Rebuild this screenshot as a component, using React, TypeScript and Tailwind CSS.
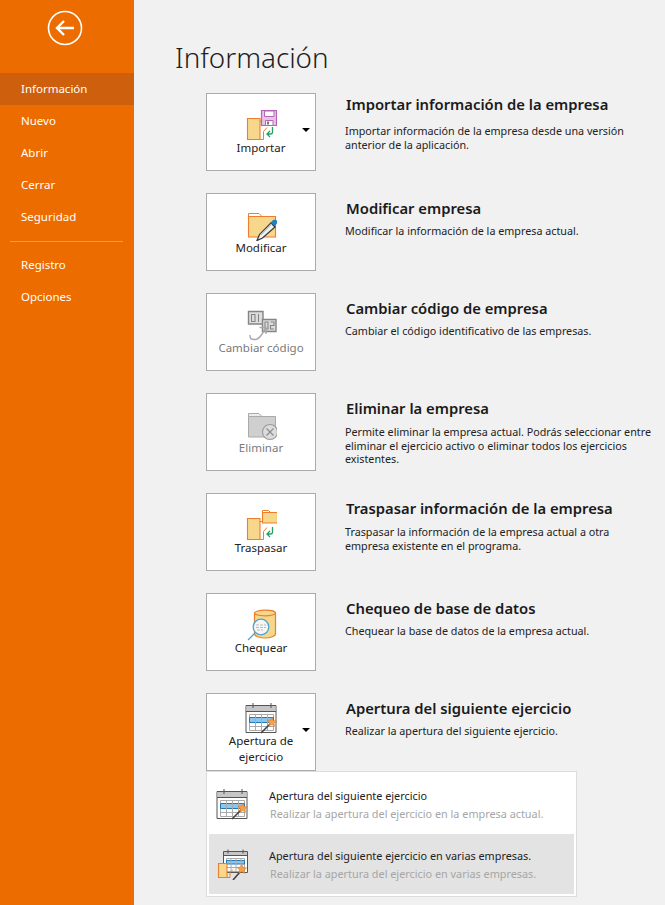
import React from 'react';

const font = { fontFamily: '"Noto Sans", "Open Sans", sans-serif' };

const ORANGE = '#ec7f2e';
const YELLOW = '#f6d78c';

// folder seen from the side, with the connector used by Importar / Traspasar
const SideFolder = () => (
  <>
    <path d="M2.500 9.500h12.500v21H2.500z" fill={YELLOW} stroke={ORANGE} strokeWidth="1.100" />
    <path d="M15 30.500h3.500v-8l3.500-4" fill="none" stroke={ORANGE} strokeWidth="1" />
  </>
);

const GreenArrow = () => (
  <path d="M27.500 18v5q0 2-2 2H22M25 22l-3 3 3 3" fill="none" stroke="#21a366" strokeWidth="1.300" />
);

const ImportIcon = () => (
  <svg width="32" height="32" viewBox="0 0 32 32">
    <SideFolder />
    <path d="M15 12h2" stroke={ORANGE} />
    <path d="M16.500 1.500h15v15h-15z" fill="#e6c4e6" stroke="#b565b5" strokeWidth="1.200" />
    <path d="M19.500 2h9.500v5.500h-9.500zM20.500 11.500h7.500v5h-7.500z" fill="#fff" stroke="#b565b5" />
    <path d="M22 12.500h2v3h-2z" fill="#777" />
    <GreenArrow />
  </svg>
);

const EditIcon = () => (
  <svg width="32" height="32" viewBox="0 0 32 32">
    <path d="M3.500 4.500h10.500l3 3H3.500z" fill="#fff" stroke={ORANGE} />
    <path d="M3.500 7.500h27v20.500h-27z" fill={YELLOW} stroke={ORANGE} strokeWidth="1.100" />
    <path d="M12 31.500l2.500-6L26 14l4 4L17.500 29z" fill="#f2f2f2" stroke="#3a3a3a" strokeWidth="1.300" />
    <path d="M15.500 26l11-11" stroke="#bdbdbd" strokeWidth="1.500" />
    <path d="M26 13.500l2.500-2.500q2-.5 3.500 1 .5 1.500-.5 2.500l-2 2.500z" fill="#1b84c9" stroke="#14699f" strokeWidth=".5" />
  </svg>
);

const CodeIcon = () => (
  <svg width="32" height="32" viewBox="0 0 32 32">
    <path d="M3.500 2.500h14.500v12.500H3.500z" fill="#dedede" stroke="#858585" strokeWidth="1.400" />
    <path d="M17.500 10.500h13.500v12h-13.500z" fill="#dedede" stroke="#858585" strokeWidth="1.400" />
    <path d="M6.500 5.500h3.500v7H6.500zM13.500 5v8M20 13h3v7h-3zM25.500 13H29v3.500h-3.500V20H29" fill="none" stroke="#858585" strokeWidth="1.100" />
    <path d="M5 26q-.500 5 5 4.500c4 0 6-4 10-10" fill="none" stroke="#a8a8a8" strokeWidth="1.400" />
    <path d="M14.500 18.500h6.500v6.500" fill="none" stroke="#a8a8a8" strokeWidth="1.400" />
  </svg>
);

const DeleteIcon = () => (
  <svg width="32" height="32" viewBox="0 0 32 32">
    <path d="M3.500 4.500h10.500l3 3H3.500z" fill="#ececec" stroke="#aaa" />
    <path d="M3.500 7.500h27v20.500h-27z" fill="#cfcfcf" stroke="#aaa" />
    <circle cx="25" cy="23" r="7.500" fill="#dcdcdc" stroke="#9a9a9a" strokeWidth="1.100" />
    <path d="M21.500 19.500l7 7M28.500 19.500l-7 7" stroke="#8a8a8a" strokeWidth="1.100" />
  </svg>
);

const TransferIcon = () => (
  <svg width="32" height="32" viewBox="0 0 32 32">
    <SideFolder />
    <path d="M15 12.500h2" stroke={ORANGE} />
    <path d="M17.500 1.500h6l2 2h-8z" fill="#fff" stroke={ORANGE} />
    <path d="M17.500 3.500h15v10.500h-15z" fill={YELLOW} stroke={ORANGE} strokeWidth="1.100" />
    <GreenArrow />
  </svg>
);

const CheckIcon = () => (
  <svg width="32" height="32" viewBox="0 0 32 32">
    <path d="M9.500 4v21c0 2 5 4 10.500 4s10.500-2 10.500-4V4z" fill={YELLOW} stroke={ORANGE} strokeWidth="1.200" />
    <ellipse cx="20" cy="4" rx="10.500" ry="2.800" fill={YELLOW} stroke={ORANGE} strokeWidth="1.200" />
    <circle cx="16" cy="18" r="7.800" fill="#f6f6f6" stroke="#4aa3d8" strokeWidth="1.300" />
    <path d="M11 16h10M11 18.500h10M12 21h6" stroke="#bbb" strokeDasharray="3 1" />
    <path d="M10 24L3 31" stroke="#4aa3d8" strokeWidth="1.300" />
  </svg>
);

const CalendarIcon = () => (
  <svg width="32" height="32" viewBox="0 0 32 32">
    <path d="M1 3.500h30v27H1z" fill="#fff" stroke="#555" />
    <path d="M1.500 4h29v5h-29z" fill="#c6c6c6" />
    <path d="M8 1v5M26 1v5M1 9.500h30" stroke="#555" />
    <path d="M4.500 12.500h24v16h-24z" fill="#fff" stroke="#aaa" />
    <path d="M4.500 15.500h24v5h-24z" fill="#8cc4ea" stroke="#1f78b8" />
    <path d="M10.500 12.500v16M16.500 12.500v16M22.500 12.500v16M4.500 24.500h24" stroke="#aaa" />
    <path d="M16 31l10-10" stroke="#444" strokeWidth="1.600" />
    <path d="M27 15.500l1 3 3.500.5-2.500 2 .5 3.500-2.500-2-3 1.500.5-3-2.500-2.500 3.500-.5z" fill="#f4a14a" stroke="#e87b22" strokeWidth=".6" />
  </svg>
);

const CalendarFolderIcon = () => (
  <svg width="32" height="32" viewBox="0 0 32 32">
    <path d="M7.500 3.500h24v21h-24z" fill="#fff" stroke="#555" />
    <path d="M8 4h23v3.500H8z" fill="#c6c6c6" />
    <path d="M12 1.500v4M27 1.500v4M7.500 7.500h24" stroke="#555" />
    <path d="M10.500 10.500h18v13h-18z" fill="#fff" stroke="#aaa" />
    <path d="M10.500 12.500h18v3.500h-18z" fill="#8cc4ea" stroke="#1f78b8" />
    <path d="M15 10.500v13M20 10.500v13M25 10.500v13M10.500 19.500h18" stroke="#aaa" />
    <path d="M2.500 15.500h8.500v14H2.500z" fill={YELLOW} stroke={ORANGE} strokeWidth="1.100" />
    <path d="M11 29.500h3v-5l3-3" fill="none" stroke={ORANGE} />
    <path d="M17 32l7-8" stroke="#444" strokeWidth="1.600" />
    <path d="M26 16.500l1 3 3.500.5-2.500 2 .5 3.500-2.500-2-3 1.500.5-3-2.500-2.500 3.500-.5z" fill="#f4a14a" stroke="#e87b22" strokeWidth=".6" />
  </svg>
);

type Row = {
  label: React.ReactNode;
  title: string;
  desc: React.ReactNode;
  icon: React.ReactNode;
  titleClass: string;
  descClass: string;
  disabled?: boolean;
  caret?: boolean;
  iconTop?: boolean;
};

const rows: Row[] = [
  {
    label: 'Importar',
    title: 'Importar información de la empresa',
    desc: <>Importar información de la empresa desde una versión<br />anterior de la aplicación.</>,
    icon: <ImportIcon />,
    titleClass: 'mt-[1px]',
    descClass: 'mt-[11px]',
    caret: true,
  },
  {
    label: 'Modificar',
    title: 'Modificar empresa',
    desc: 'Modificar la información de la empresa actual.',
    icon: <EditIcon />,
    titleClass: 'mt-[5px]',
    descClass: 'mt-[7px]',
  },
  {
    label: 'Cambiar código',
    title: 'Cambiar código de empresa',
    desc: 'Cambiar el código identificativo de las empresas.',
    icon: <CodeIcon />,
    titleClass: 'mt-[5px]',
    descClass: 'mt-[7px]',
    disabled: true,
  },
  {
    label: 'Eliminar',
    title: 'Eliminar la empresa',
    desc: <>Permite eliminar la empresa actual. Podrás seleccionar entre<br />eliminar el ejercicio activo o eliminar todos los ejercicios<br />existentes.</>,
    icon: <DeleteIcon />,
    titleClass: 'mt-[5px]',
    descClass: 'mt-[8px]',
    disabled: true,
  },
  {
    label: 'Traspasar',
    title: 'Traspasar información de la empresa',
    desc: <>Traspasar la información de la empresa actual a otra<br />empresa existente en el programa.</>,
    icon: <TransferIcon />,
    titleClass: 'mt-[5px]',
    descClass: 'mt-[8px]',
  },
  {
    label: 'Chequear',
    title: 'Chequeo de base de datos',
    desc: 'Chequear la base de datos de la empresa actual.',
    icon: <CheckIcon />,
    titleClass: 'mt-[5px]',
    descClass: 'mt-[7px]',
  },
  {
    label: <>Apertura de<br />ejercicio</>,
    title: 'Apertura del siguiente ejercicio',
    desc: 'Realizar la apertura del siguiente ejercicio.',
    icon: <CalendarIcon />,
    titleClass: 'mt-[5px]',
    descClass: 'mt-[7px]',
    caret: true,
    iconTop: true,
  },
];

const NavItem = ({ text, active }: { text: string; active?: boolean }) => (
  <div className={`h-8 pl-[21px] flex items-center text-[11.5px] text-white ${active ? 'bg-[#ce5f0d]' : ''}`}>
    {text}
  </div>
);

const ActionRow = ({ row }: { row: Row }) => (
  <div className="h-[100px] flex">
    <div className={`relative w-[110px] h-[78px] border border-[#ababab] bg-white flex flex-col items-center shrink-0 ${row.iconTop ? 'pt-[8px]' : 'pt-[15px]'}`}>
      <div className="w-8 h-8 shrink-0">{row.icon}</div>
      <div className={`text-[11.5px] leading-4 text-center -mt-px ${row.disabled ? 'text-[#7a7a7a]' : 'text-[#222]'}`}>
        {row.label}
      </div>
      {row.caret && (
        <div className="absolute left-[95px] top-[34px] border-x-[4px] border-t-[4px] border-x-transparent border-t-black" />
      )}
    </div>
    <div className="ml-[29px]">
      <h2 className={`ml-px text-[14.8px] leading-5 font-semibold text-[#1a1a1a] whitespace-nowrap ${row.titleClass}`}>{row.title}</h2>
      <p className={`text-[10.75px] leading-[13.5px] text-[#222] whitespace-nowrap ${row.descClass}`}>{row.desc}</p>
    </div>
  </div>
);

const MenuEntry = ({ title, desc, icon, active }: { title: string; desc: string; icon: React.ReactNode; active?: boolean }) => (
  <div className={`h-[60px] flex items-center pl-[7px] ${active ? 'bg-[#e3e3e3]' : ''}`}>
    <div className="w-8 h-8 shrink-0">{icon}</div>
    <div className="ml-[21px]">
      <div className="text-[10.85px] leading-[15px] text-[#222]">{title}</div>
      <div className="text-[10.85px] leading-[15px] text-[#a6a6a6] mt-[3px] ml-[1px]">{desc}</div>
    </div>
  </div>
);

export default function App() {
  return (
    <div className="w-[665px] h-[905px] flex bg-[#f1f1f1] overflow-hidden" style={font}>
      <aside className="w-[134px] shrink-0 bg-[#ec6c00]">
        <div className="h-[73px] pl-[47px] pt-[10px]">
          <svg width="36" height="36" viewBox="0 0 36 36">
            <circle cx="18" cy="18" r="16.500" fill="none" stroke="#fff" strokeWidth="1.600" />
            <path d="M10 18h17M17 11l-7 7 7 7" fill="none" stroke="#fff" strokeWidth="2.400" />
          </svg>
        </div>
        <NavItem text="Información" active />
        <NavItem text="Nuevo" />
        <NavItem text="Abrir" />
        <NavItem text="Cerrar" />
        <NavItem text="Seguridad" />
        <div className="h-px mx-[10px] mt-[8px] mb-[7px] w-[113px] bg-[#f39a52]" />
        <NavItem text="Registro" />
        <NavItem text="Opciones" />
      </aside>
      <main className="relative flex-1 pl-[72px] pt-[36px]">
        <h1 className="-ml-[31px] text-[27.8px] leading-[42px] font-light text-[#1f1f1f]">Información</h1>
        <div className="mt-[15px]">
          {rows.map((r, i) => (
            <ActionRow key={i} row={r} />
          ))}
        </div>
        <div className="absolute left-[72px] top-[771px] w-[371px] h-[126px] border border-[#dcdcdc] bg-white px-[2px] pt-[2px]">
          <MenuEntry
            title="Apertura del siguiente ejercicio"
            desc="Realizar la apertura del ejercicio en la empresa actual."
            icon={<CalendarIcon />}
          />
          <MenuEntry
            active
            title="Apertura del siguiente ejercicio en varias empresas."
            desc="Realizar la apertura del ejercicio en varias empresas."
            icon={<CalendarFolderIcon />}
          />
        </div>
      </main>
    </div>
  );
}
